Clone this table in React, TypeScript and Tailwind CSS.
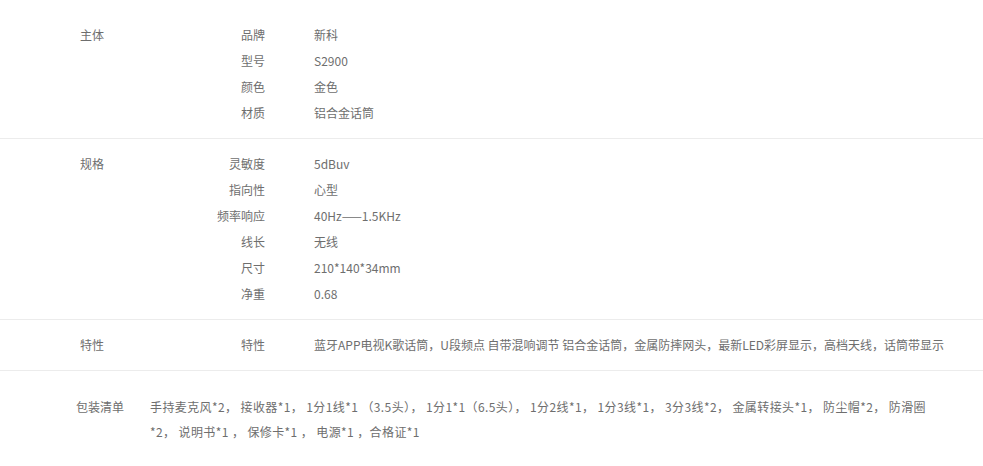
import React from "react";

type Group = { label: string; rows: [string, string][] };

const groups: Group[] = [
  {
    label: "主体",
    rows: [
      ["品牌", "新科"],
      ["型号", "S2900"],
      ["颜色", "金色"],
      ["材质", "铝合金话筒"],
    ],
  },
  {
    label: "规格",
    rows: [
      ["灵敏度", "5dBuv"],
      ["指向性", "心型"],
      ["频率响应", "40Hz——1.5KHz"],
      ["线长", "无线"],
      ["尺寸", "210*140*34mm"],
      ["净重", "0.68"],
    ],
  },
  {
    label: "特性",
    rows: [
      [
        "特性",
        "蓝牙APP电视K歌话筒，U段频点 自带混响调节 铝合金话筒，金属防摔网头，最新LED彩屏显示，高档天线，话筒带显示",
      ],
    ],
  },
];

export default function App() {
  return (
    <div
      className="w-[983px] h-[466px] bg-white text-[12px] text-[#6e6e6e] overflow-hidden"
      style={{ fontFamily: '"Noto Sans CJK SC", "Microsoft YaHei", sans-serif' }}
    >
      <div className="pt-[10px]">
        {groups.map((g) => (
          <div key={g.label} className="flex border-b border-[#ececec] py-[12px] leading-[26px]">
            <div className="w-[136px] pl-[80px] shrink-0">{g.label}</div>
            <div className="flex flex-col">
              {g.rows.map(([k, v]) => (
                <div key={k} className="flex">
                  <div className="w-[129px] text-right shrink-0">{k}</div>
                  <div className="pl-[49px] whitespace-nowrap">{v}</div>
                </div>
              ))}
            </div>
          </div>
        ))}
        <div className="flex pt-[23px] leading-[25px]">
          <div className="w-[150px] pl-[76px] shrink-0">包装清单</div>
          <div className="whitespace-nowrap tracking-[0.4px]">
            <div>
              手持麦克风*2， 接收器*1， 1分1线*1 （3.5头）， 1分1*1（6.5头）， 1分2线*1， 1分3线*1， 3分3线*2， 金属转接头*1， 防尘帽*2， 防滑圈
            </div>
            <div>*2， 说明书*1 ， 保修卡*1 ， 电源*1 ，合格证*1</div>
          </div>
        </div>
      </div>
    </div>
  );
}
